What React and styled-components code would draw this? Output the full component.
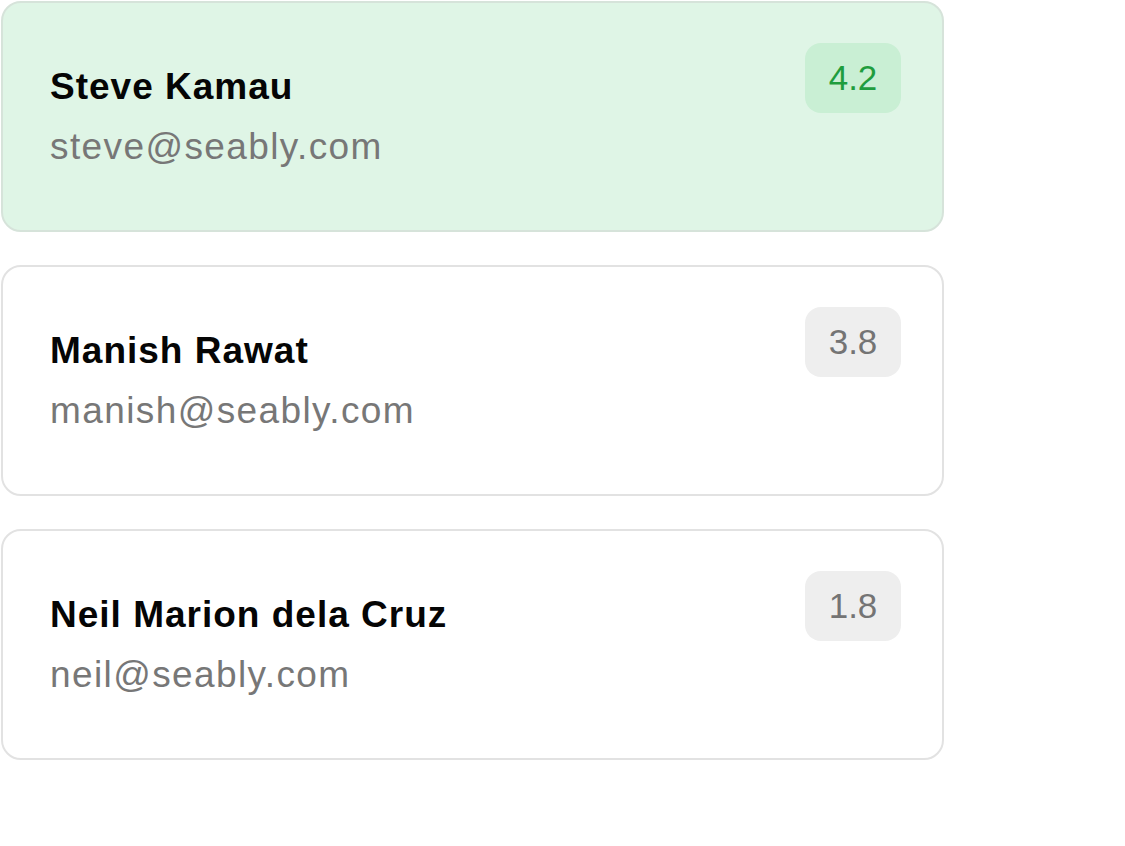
import styled, { createGlobalStyle } from "styled-components";

const GlobalStyle = createGlobalStyle`
  html, body {
    margin: 0;
    padding: 0;
    background: #fff;
    font-family: "Liberation Sans", Arial, sans-serif;
  }
`;

const List = styled.div`
  display: flex;
  flex-direction: column;
  gap: 33px;
  width: 944px;
  padding: 1px 0 0 1px;
  box-sizing: border-box;
`;

const Card = styled.div`
  display: flex;
  justify-content: space-between;
  align-items: center;
  height: 231px;
  box-sizing: border-box;
  padding: 0 41px 0 47px;
  border: 2px solid ${(p) => (p.$active ? "#d6e3da" : "#e2e2e2")};
  border-radius: 20px;
  background: ${(p) => (p.$active ? "#dff5e6" : "#fff")};
`;

const Info = styled.div`
  display: flex;
  flex-direction: column;
`;

const Name = styled.div`
  font-size: 37px;
  line-height: 60px;
  font-weight: 700;
  color: #050505;
  letter-spacing: 1px;
`;

const Email = styled.div`
  font-size: 37px;
  line-height: 60px;
  color: #777;
  letter-spacing: 1.4px;
`;

const Score = styled.div`
  align-self: flex-start;
  margin-top: 40px;
  width: 96px;
  height: 70px;
  display: flex;
  align-items: center;
  justify-content: center;
  border-radius: 16px;
  font-size: 35px;
  background: ${(p) => (p.$active ? "#c9efd4" : "#eeeeee")};
  color: ${(p) => (p.$active ? "#1f9d3e" : "#747474")};
`;

const people = [
  { name: "Steve Kamau", email: "steve@seably.com", score: "4.2", active: true },
  { name: "Manish Rawat", email: "manish@seably.com", score: "3.8" },
  { name: "Neil Marion dela Cruz", email: "neil@seably.com", score: "1.8" },
];

const App = () => {
  return (
    <>
      <GlobalStyle />
      <List>
        {people.map((p) => (
          <Card key={p.email} $active={p.active}>
            <Info>
              <Name>{p.name}</Name>
              <Email>{p.email}</Email>
            </Info>
            <Score $active={p.active}>{p.score}</Score>
          </Card>
        ))}
      </List>
    </>
  );
};

export default App;
